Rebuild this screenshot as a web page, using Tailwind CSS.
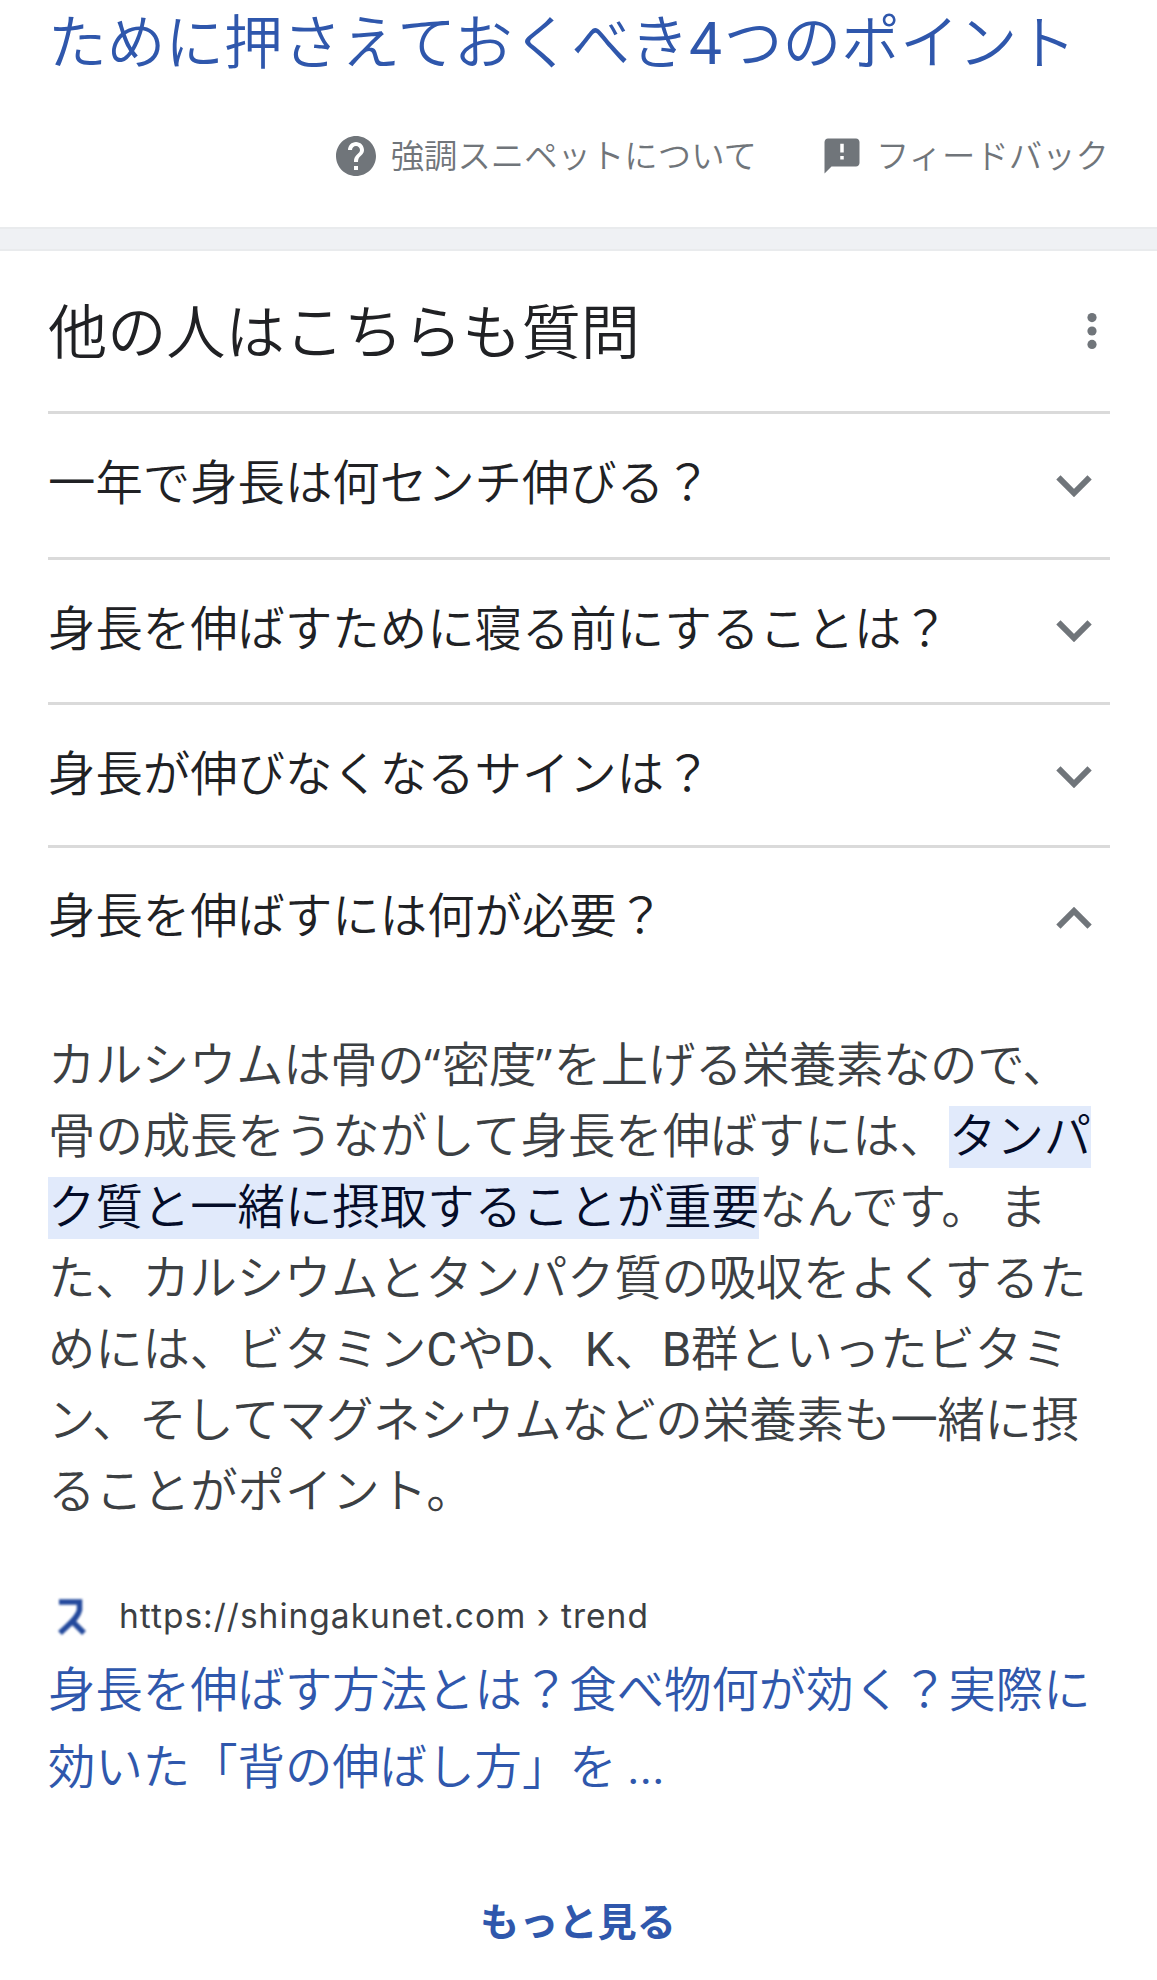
<!DOCTYPE html>
<html lang="ja">
<head>
    <meta charset="UTF-8">
    <meta name="viewport" content="width=device-width, initial-scale=1.0">
    <title>他の人はこちらも質問</title>
    <script src="https://cdn.jsdelivr.net/npm/@tailwindcss/browser@4"></script>
    <style>
        body {
            font-family: 'Noto Sans CJK JP', sans-serif;
        }
        .latin {
            font-family: Roboto, sans-serif;
            font-weight: 400;
        }
        .url {
            font-family: Inter, Roboto, sans-serif;
            font-weight: 400;
        }
        .quote {
            font-family: 'Open Sans', sans-serif;
            font-weight: 500;
        }
    </style>
</head>
<body class="bg-white text-[#202124] h-[1980px] overflow-hidden whitespace-nowrap font-[350]">

    <!-- Featured snippet footer -->
    <section class="h-[227px] px-12">
        <a class="block h-[77px] leading-[77px] text-[58.7px] text-[#2f57ac]">ために押さえておくべき<span class="latin mr-[2px]">4</span>つのポイント</a>
        <div class="flex justify-end items-center h-[48px] mt-[55px] text-[33.4px] leading-[44px] text-[#70757a]">
            <svg class="w-[48px] h-[48px] mr-[11px]" viewBox="0 0 24 24" fill="#70757a">
                <path d="M12 2C6.48 2 2 6.48 2 12s4.48 10 10 10 10-4.48 10-10S17.52 2 12 2zm1 17h-2v-2h2v2zm2.07-7.75l-.9.92C13.45 12.9 13 13.5 13 15h-2v-.5c0-1.1.45-2.1 1.17-2.83l1.24-1.26c.37-.36.59-.86.59-1.41 0-1.1-.9-2-2-2s-2 .9-2 2H8c0-2.21 1.79-4 4-4s4 1.79 4 4c0 .88-.36 1.68-.93 2.25z"/>
            </svg>
            <span class="-mt-1">強調スニペットについて</span>
            <svg class="w-[42px] h-[42px] ml-[64px] mr-[13px]" viewBox="0 0 24 24" fill="#70757a">
                <path d="M20 2H4c-1.1 0-1.99.9-1.99 2L2 22l4-4h14c1.1 0 2-.9 2-2V4c0-1.1-.9-2-2-2zm-7 12h-2v-2h2v2zm0-4h-2V5h2v5z"/>
            </svg>
            <span class="-mt-1">フィードバック</span>
        </div>
    </section>

    <div class="h-[24px] bg-[#eff1f4] border-y-2 border-[#e9ebed]"></div>

    <!-- People also ask -->
    <section class="ml-12 mr-[47px]">
        <div class="flex items-center justify-between h-[160px]">
            <h2 class="text-[59.2px] leading-[80px] -mt-1.5">他の人はこちらも質問</h2>
            <svg class="w-[36px] h-[36px]" viewBox="0 0 36 36" fill="#70757a">
                <circle cx="18" cy="4.6" r="4.6"/>
                <circle cx="18" cy="18" r="4.6"/>
                <circle cx="18" cy="31.4" r="4.6"/>
            </svg>
        </div>

        <div class="flex items-center justify-between h-[146px] border-t-3 border-[#dadada] pr-[18px]">
            <span class="text-[47.4px] leading-[64px] -mt-3">一年で身長は何センチ伸びる？</span>
            <svg class="w-[36px] h-[22px]" viewBox="0 0 36 22" fill="none" stroke="#70757a" stroke-width="6"><path d="M2.4 2.4L18 18L33.6 2.4"/></svg>
        </div>
        <div class="flex items-center justify-between h-[145px] border-t-3 border-[#dadada] pr-[18px]">
            <span class="text-[47.4px] leading-[64px] -mt-2.5">身長を伸ばすために寝る前にすることは？</span>
            <svg class="w-[36px] h-[22px]" viewBox="0 0 36 22" fill="none" stroke="#70757a" stroke-width="6"><path d="M2.4 2.4L18 18L33.6 2.4"/></svg>
        </div>
        <div class="flex items-center justify-between h-[143px] border-t-3 border-[#dadada] pr-[18px]">
            <span class="text-[47.4px] leading-[64px] -mt-2">身長が伸びなくなるサインは？</span>
            <svg class="w-[36px] h-[22px] mt-1" viewBox="0 0 36 22" fill="none" stroke="#70757a" stroke-width="6"><path d="M2.4 2.4L18 18L33.6 2.4"/></svg>
        </div>
        <div class="flex items-center justify-between h-[142px] border-t-3 border-[#dadada] pr-[18px]">
            <span class="text-[47.4px] leading-[64px] -mt-2.5">身長を伸ばすには何が必要？</span>
            <svg class="w-[36px] h-[22px]" viewBox="0 0 36 22" fill="none" stroke="#70757a" stroke-width="6"><path d="M2.4 19.6L18 4L33.6 19.6"/></svg>
        </div>

        <!-- Answer -->
        <div class="mt-[48px] text-[47.4px] leading-[53px] text-[#3c4043]">
            <div class="h-[71px] tracking-[-0.35px]">カルシウムは骨の<span class="quote text-[46px] mr-[2px]">“</span>密度<span class="quote text-[46px] mr-[2px]">”</span>を上げる栄養素なので、</div>
            <div class="h-[71px] flex"><span class="mr-[2px]">骨の成長をうながして身長を伸ばすには、</span><mark class="h-[62px] bg-[#e1eafb] text-[#040c28]">タンパ</mark></div>
            <div class="h-[71px] flex"><mark class="h-[62px] bg-[#e1eafb] text-[#040c28]">ク質と一緒に摂取することが重要</mark><span>なんです。 ま</span></div>
            <div class="h-[71px] tracking-[-0.2px]">た、カルシウムとタンパク質の吸収をよくするた</div>
            <div class="h-[71px] tracking-[-0.1px]">めには、ビタミン<span class="latin">C</span>や<span class="latin">D</span>、<span class="latin ml-[2px]">K</span>、<span class="latin">B</span>群といったビタミ</div>
            <div class="h-[71px] tracking-[-0.35px]">ン、そしてマグネシウムなどの栄養素も一緒に摂</div>
            <div class="h-[71px]">ることがポイント。</div>
        </div>

        <!-- Source -->
        <div class="flex items-center h-[44px] mt-[62px]">
            <svg class="w-[30px] h-[37px] ml-[9px] mr-[32px] blur-[1px]" viewBox="0 0 30 37" fill="none" stroke="#23499c" stroke-width="5.5">
                <path d="M2 4H22.5V12C21 20 12 26 3 35M14 22L27 35"/>
            </svg>
            <span class="url text-[33.5px] leading-[44px] tracking-[1px] text-[#3c4043]">https://shingakunet.com › trend</span>
        </div>
        <a class="block mt-[10px] text-[47.4px] leading-[77px] text-[#2f57ac]">身長を伸ばす方法とは？食べ物何が効く？実際に<br>効いた「背の伸ばし方」を <span class="latin">...</span></a>

        <div class="mt-[84px] pr-[2px] text-center text-[39.2px] leading-[56px] font-bold text-[#2f57ac]">もっと見る</div>
    </section>

</body>
</html>
